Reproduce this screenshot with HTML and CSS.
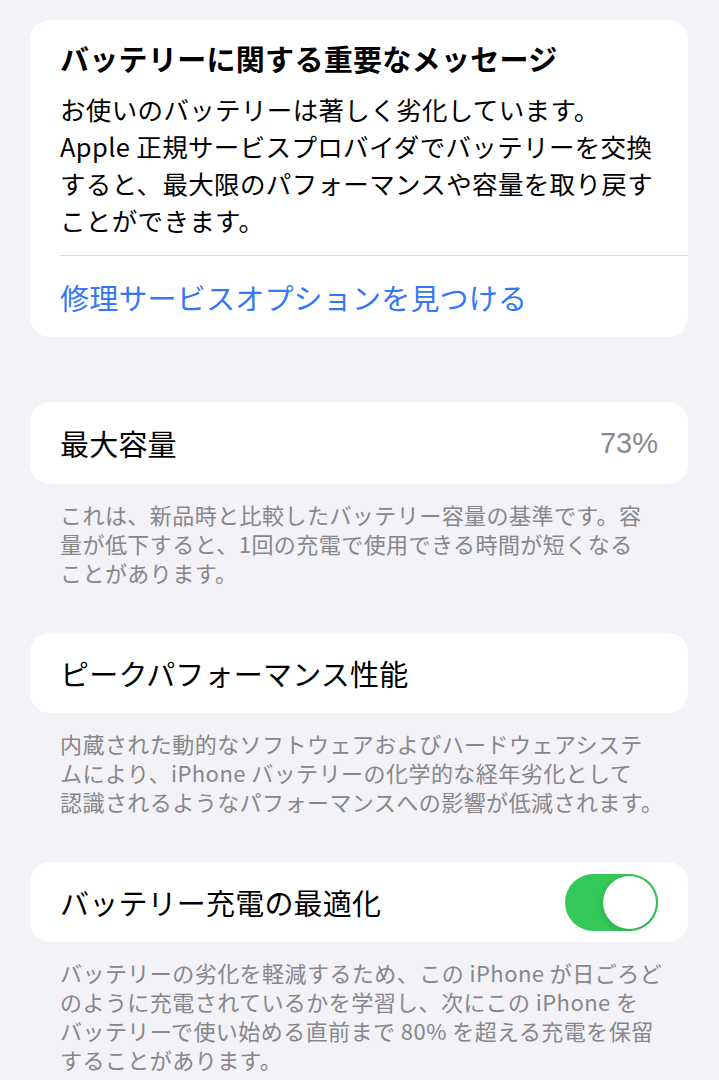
FILE: index.html
```html
<!DOCTYPE html>
<html lang="ja">
<head>
<meta charset="utf-8">
<title>バッテリーの状態</title>
<link rel="stylesheet" href="styles.css">
</head>
<body>
<main class="page">
  <section class="card card-msg">
    <h1 class="msg-title">バッテリーに関する重要なメッセージ</h1>
    <p class="msg-body">お使いのバッテリーは著しく劣化しています。<br>Apple 正規サービスプロバイダでバッテリーを交換<br>すると、最大限のパフォーマンスや容量を取り戻す<br>ことができます。</p>
    <div class="divider"></div>
    <div class="link-row">修理サービスオプションを見つける</div>
  </section>

  <section class="card row row-tall">
    <span class="row-label">最大容量</span>
    <span class="row-value">73%</span>
  </section>
  <p class="footer">これは、新品時と比較したバッテリー容量の基準です。容<br>量が低下すると、1回の充電で使用できる時間が短くなる<br>ことがあります。</p>

  <section class="card row">
    <span class="row-label">ピークパフォーマンス性能</span>
  </section>
  <p class="footer">内蔵された動的なソフトウェアおよびハードウェアシステ<br>ムにより、iPhone バッテリーの化学的な経年劣化として<br>認識されるようなパフォーマンスへの影響が低減されます。</p>

  <section class="card row">
    <span class="row-label">バッテリー充電の最適化</span>
    <span class="toggle"><span class="knob"></span></span>
  </section>
  <p class="footer">バッテリーの劣化を軽減するため、この iPhone が日ごろど<br>のように充電されているかを学習し、次にこの iPhone を<br>バッテリーで使い始める直前まで 80% を超える充電を保留<br>することがあります。</p>
</main>
</body>
</html>
```
FILE: styles.css
```css
html, body {
  margin: 0;
  padding: 0;
  background: #f2f2f7;
}
body {
  font-family: "Noto Sans CJK JP", "Noto Sans", sans-serif;
  color: #000;
  -webkit-font-smoothing: antialiased;
}
.page {
  padding: 20px 31px 0 30px;
  display: flex;
  flex-direction: column;
}
.card {
  background: #fff;
  border-radius: 20px;
}
.card-msg {
  padding: 20px 0 0 30px;
}
.msg-title {
  margin: 0;
  font-size: 29px;
  font-weight: 700;
  line-height: 36px;
  letter-spacing: 0.3px;
  white-space: nowrap;
}
.msg-body {
  margin: 14px 0 0;
  padding-right: 10px;
  font-size: 25.5px;
  line-height: 37px;
  letter-spacing: 0.35px;
  white-space: nowrap;
}
.divider {
  height: 1px;
  background: #dcdce0;
  margin-top: 17px;
}
.link-row {
  height: 81px;
  display: flex;
  align-items: center;
  color: #3478f6;
  font-size: 29px;
  letter-spacing: 0.2px;
}
.row {
  height: 80px;
  margin-top: 46px;
  padding: 0 30px;
  display: flex;
  align-items: center;
  justify-content: space-between;
  font-size: 29px;
  letter-spacing: 0.2px;
}
.row-tall {
  height: 82px;
  margin-top: 65px;
}
.row-value {
  font-family: "Liberation Sans", sans-serif;
  color: #8a8a8e;
  font-size: 29px;
  letter-spacing: 0;
}
.footer {
  margin: 16px 0 0;
  padding: 0 10px 0 30px;
  font-size: 22px;
  line-height: 29px;
  letter-spacing: 0.45px;
  color: #86868b;
  white-space: nowrap;
}
.toggle {
  width: 93px;
  height: 57px;
  border-radius: 29px;
  background: #34c759;
  display: flex;
  align-items: center;
  justify-content: flex-end;
  padding: 0 2px;
  box-sizing: border-box;
}
.knob {
  width: 53px;
  height: 53px;
  border-radius: 50%;
  background: #fff;
  box-shadow: 0 2px 6px rgba(0, 0, 0, 0.15), 0 0 1px rgba(0, 0, 0, 0.1);
}
```
